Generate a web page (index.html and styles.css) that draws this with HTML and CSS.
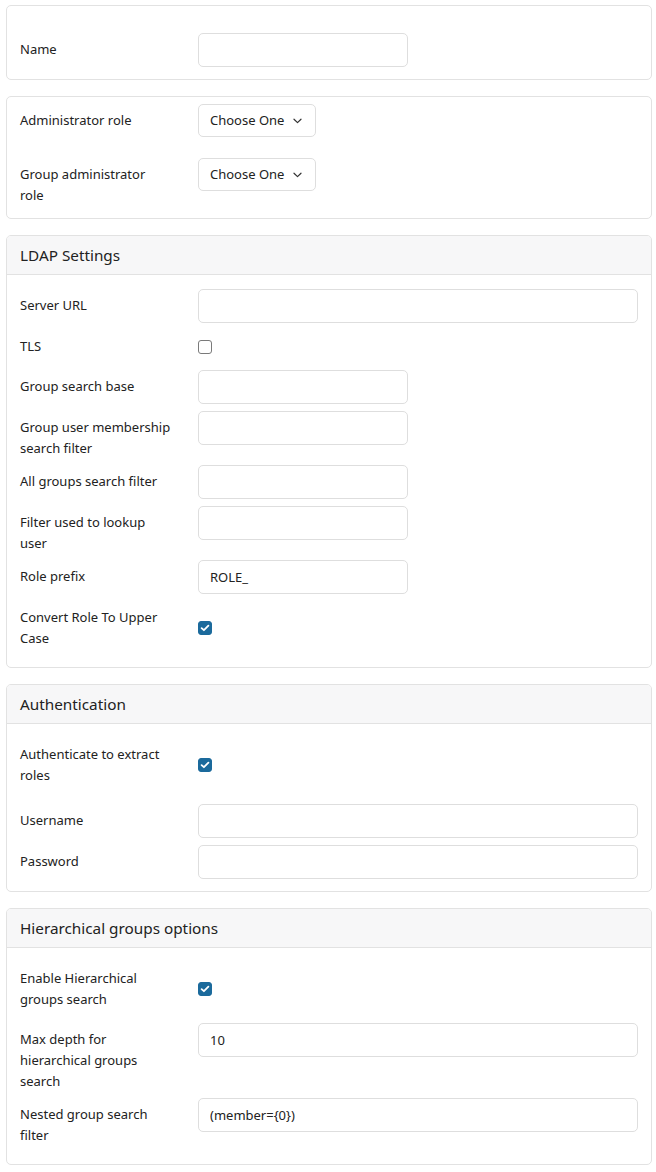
FILE: index.html
```html
<!DOCTYPE html>
<html lang="en">
<head>
<meta charset="utf-8">
<title>Group source</title>
<link rel="stylesheet" href="styles.css">
</head>
<body>
<main class="page">

  <section class="card">
    <div class="card-body card-body--first">
      <div class="field">
        <label class="field-label">Name</label>
        <div class="field-control"><input class="text-input text-input--short" type="text"></div>
      </div>
    </div>
  </section>

  <section class="card">
    <div class="card-body card-body--roles">
      <div class="field">
        <label class="field-label">Administrator role</label>
        <div class="field-control field-control--select">
          <div class="select">
            <span>Choose One</span>
            <svg class="select-caret" width="9" height="6" viewBox="0 0 9 6" aria-hidden="true"><path d="M1 1.2 L4.5 4.6 L8 1.2" fill="none" stroke="#333" stroke-width="1.2" stroke-linecap="round" stroke-linejoin="round"/></svg>
          </div>
        </div>
      </div>
      <div class="field">
        <label class="field-label">Group administrator role</label>
        <div class="field-control field-control--select">
          <div class="select">
            <span>Choose One</span>
            <svg class="select-caret" width="9" height="6" viewBox="0 0 9 6" aria-hidden="true"><path d="M1 1.2 L4.5 4.6 L8 1.2" fill="none" stroke="#333" stroke-width="1.2" stroke-linecap="round" stroke-linejoin="round"/></svg>
          </div>
        </div>
      </div>
    </div>
  </section>

  <section class="card">
    <header class="card-header">LDAP Settings</header>
    <div class="card-body">
      <div class="field">
        <label class="field-label">Server URL</label>
        <div class="field-control"><input class="text-input" type="text"></div>
      </div>
      <div class="field field--check">
        <label class="field-label">TLS</label>
        <div class="field-control"><span class="checkbox"></span></div>
      </div>
      <div class="field">
        <label class="field-label">Group search base</label>
        <div class="field-control"><input class="text-input text-input--short" type="text"></div>
      </div>
      <div class="field">
        <label class="field-label">Group user membership search filter</label>
        <div class="field-control"><input class="text-input text-input--short" type="text"></div>
      </div>
      <div class="field">
        <label class="field-label">All groups search filter</label>
        <div class="field-control"><input class="text-input text-input--short" type="text"></div>
      </div>
      <div class="field">
        <label class="field-label">Filter used to lookup user</label>
        <div class="field-control"><input class="text-input text-input--short" type="text"></div>
      </div>
      <div class="field">
        <label class="field-label">Role prefix</label>
        <div class="field-control"><input class="text-input text-input--short" type="text" value="ROLE_"></div>
      </div>
      <div class="field field--check">
        <label class="field-label">Convert Role To Upper Case</label>
        <div class="field-control">
          <span class="checkbox checkbox--on"><svg width="10" height="8" viewBox="0 0 10 8" aria-hidden="true"><path d="M1.6 4.1 L3.9 6.2 L8.4 1.7" fill="none" stroke="#fff" stroke-width="1.8" stroke-linecap="round" stroke-linejoin="round"/></svg></span>
        </div>
      </div>
    </div>
  </section>

  <section class="card">
    <header class="card-header">Authentication</header>
    <div class="card-body">
      <div class="field field--check field--spaced">
        <label class="field-label">Authenticate to extract roles</label>
        <div class="field-control">
          <span class="checkbox checkbox--on"><svg width="10" height="8" viewBox="0 0 10 8" aria-hidden="true"><path d="M1.6 4.1 L3.9 6.2 L8.4 1.7" fill="none" stroke="#fff" stroke-width="1.8" stroke-linecap="round" stroke-linejoin="round"/></svg></span>
        </div>
      </div>
      <div class="field">
        <label class="field-label">Username</label>
        <div class="field-control"><input class="text-input" type="text"></div>
      </div>
      <div class="field">
        <label class="field-label">Password</label>
        <div class="field-control"><input class="text-input" type="password"></div>
      </div>
    </div>
  </section>

  <section class="card">
    <header class="card-header">Hierarchical groups options</header>
    <div class="card-body">
      <div class="field field--check">
        <label class="field-label">Enable Hierarchical groups search</label>
        <div class="field-control">
          <span class="checkbox checkbox--on"><svg width="10" height="8" viewBox="0 0 10 8" aria-hidden="true"><path d="M1.6 4.1 L3.9 6.2 L8.4 1.7" fill="none" stroke="#fff" stroke-width="1.8" stroke-linecap="round" stroke-linejoin="round"/></svg></span>
        </div>
      </div>
      <div class="field">
        <label class="field-label">Max depth for hierarchical groups search</label>
        <div class="field-control"><input class="text-input" type="text" value="10"></div>
      </div>
      <div class="field">
        <label class="field-label">Nested group search filter</label>
        <div class="field-control"><input class="text-input" type="text" value="(member={0})"></div>
      </div>
    </div>
  </section>

</main>
</body>
</html>
```

FILE: styles.css
```css
* {
  box-sizing: border-box;
}

html, body {
  margin: 0;
  background: #ffffff;
}

body {
  font-family: "Noto Sans", "Open Sans", sans-serif;
  font-size: 13px;
  line-height: 21px;
  color: #222222;
}

.page {
  padding: 5px 4px 0 6px;
}

/* cards */
.card {
  border: 1px solid #e2e2e2;
  border-radius: 5px;
  margin-bottom: 16px;
  background: #fff;
}

.card-header {
  height: 39px;
  padding: 0 13px;
  line-height: 38px;
  font-size: 15.3px;
  color: #222;
  background: #f7f7f8;
  border-bottom: 1px solid #e2e2e2;
  border-radius: 4px 4px 0 0;
}

.card-body {
  padding: 14px 13px 12px 13px;
}

.card-body--first {
  padding-top: 27px;
}

.card-body--roles {
  padding-top: 7px;
  padding-bottom: 6px;
}

/* label / control rows */
.field {
  display: flex;
  align-items: flex-start;
}

.field-label {
  flex: 0 0 152px;
  margin-right: 26px;
  padding: 6px 0;
  line-height: 21px;
}

.field-control {
  flex: 1;
  min-width: 0;
  margin-bottom: 7px;
}

.field-control--select {
  margin-bottom: 21px;
}

.field--check {
  align-items: stretch;
}

.field--check .field-label {
  margin-bottom: 7px;
}

.field--check .field-control {
  display: flex;
  align-items: center;
}

.field--spaced {
  margin-bottom: 5px;
}

.field:last-child .field-label,
.field:last-child .field-control {
  margin-bottom: 0;
}

/* inputs */
.text-input {
  display: block;
  width: 100%;
  height: 34px;
  padding: 0 11px;
  border: 1px solid #dedede;
  border-radius: 5px;
  background: #fff;
  font: inherit;
  color: #222;
  outline: none;
}

.text-input--short {
  width: 210px;
}

.select {
  display: flex;
  align-items: center;
  width: 118px;
  height: 33px;
  padding: 0 11px;
  border: 1px solid #dedede;
  border-radius: 5px;
  background: #fff;
  color: #222;
  white-space: nowrap;
}

.select-caret {
  margin-left: 9px;
  flex: none;
}

/* checkboxes */
.checkbox {
  display: inline-flex;
  align-items: center;
  justify-content: center;
  width: 14px;
  height: 14px;
  border: 1px solid #7a7a7a;
  border-radius: 3px;
  background: #fff;
}

.checkbox--on {
  border-color: #1b6a9c;
  background: #1b6a9c;
}

.checkbox svg {
  display: block;
}
```
